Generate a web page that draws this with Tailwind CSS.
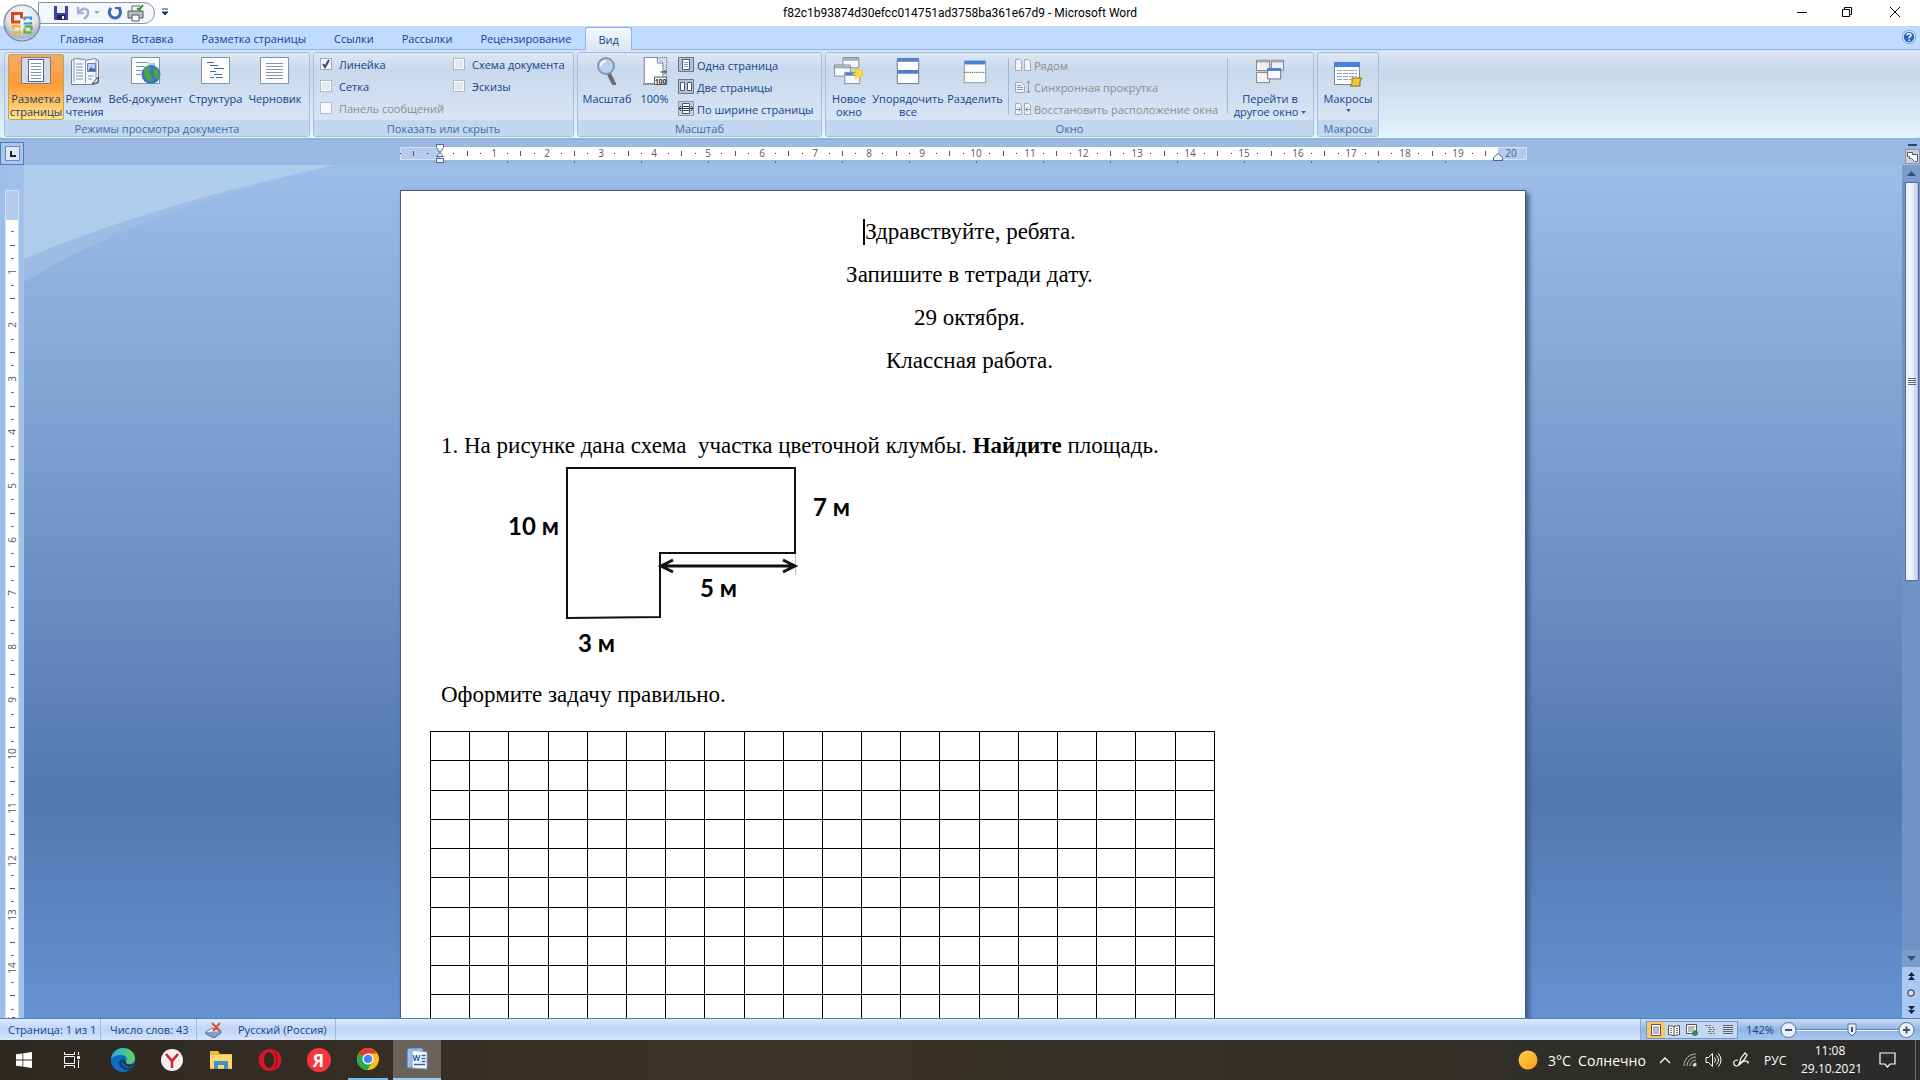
<!DOCTYPE html>
<html lang="ru">
<head>
<meta charset="utf-8">
<title>Microsoft Word</title>
<script src="https://cdn.jsdelivr.net/npm/@tailwindcss/browser@4"></script>
</head>
<body class="flex h-screen flex-col overflow-hidden bg-[#9ab9e2] font-['Open_Sans','Noto_Sans',sans-serif] text-[11px] leading-[13px] text-[#15428b]">

<!-- Title bar -->
<header class="relative flex h-[26px] shrink-0 items-center bg-white">
  <button aria-label="Office" class="absolute top-[4px] left-[3px] z-10 size-[38px]">
    <svg viewBox="0 0 38 38" class="size-full">
      <defs><radialGradient id="orb" cx=".5" cy=".3" r=".75"><stop offset="0" stop-color="#fff"/><stop offset=".55" stop-color="#dfe3ea"/><stop offset=".8" stop-color="#aab3c4"/><stop offset="1" stop-color="#f4f6fa"/></radialGradient></defs>
      <circle cx="19" cy="19" r="18" fill="url(#orb)" stroke="#7d8796" stroke-width="1.2"/>
      <g fill="none" stroke-width="3">
        <path d="M17.500 18H9.500V9.500h9v5" stroke="#d9481c"/>
        <path d="M21.500 13.500h6.500v6h-6.500z" stroke="#4a90d0" stroke-width="2.2" stroke-dasharray="9 2"/>
        <path d="M16.500 22h-6.500v6.500h6.500z" stroke="#f5b52a" stroke-width="2.4" stroke-dasharray="10 2"/>
        <path d="M21.500 22.500h7v6h-7z" stroke="#6fae45" stroke-width="2.4" stroke-dasharray="11 2"/>
      </g>
      <path d="M17.500 17.500h3v3h-3z" fill="#f2f4f8"/>
    </svg>
  </button>
  <div class="absolute top-[2px] left-[38px] flex h-[22px] w-[117px] items-center rounded-r-full border border-[#8a94a5] bg-[#f3f6fb] pl-[14px]">
    <button aria-label="Сохранить" class="size-4"><svg viewBox="0 0 16 16"><path d="M1 1h14v14H2l-1-1z" fill="#3d449c"/><path d="M4 1h8v7H4z" fill="#e9effb"/><path d="M4 10h8v5H4z" fill="#1f2560"/><path d="M9 11h2v3H9z" fill="#fff"/></svg></button>
    <button aria-label="Отменить" class="ml-[7px] size-4"><svg viewBox="0 0 16 16" fill="none" stroke="#a3b3cf" stroke-width="2.4"><path d="M3 7c4-5 10-4 9 2-1 3-3 4-4 5M2 2v6h6"/></svg></button>
    <svg viewBox="0 0 6 4" class="ml-[2px] h-[4px] w-[6px]"><path d="M0 0h6L3 3z" fill="#a5a9b0"/></svg>
    <button aria-label="Вернуть" class="ml-[7px] size-4"><svg viewBox="0 0 16 16" fill="none" stroke="#3a6cb8" stroke-width="3"><path d="M4 3c-4 5 0 10 4 10 5 0 7-6 4-10"/><path d="M8 3h5v5" stroke-width="2"/></svg></button>
    <button aria-label="Печать" class="ml-[4px] size-[18px]"><svg viewBox="0 0 18 18"><path d="M5 2h8v6H5z" fill="#fff" stroke="#666"/><path d="M1 7h15v7H1z" fill="#b9bcc2" stroke="#555"/><path d="M5 11h7v6H5z" fill="#fff" stroke="#555"/><path d="M10 4l2 2 4-5" fill="none" stroke="#2f9a32" stroke-width="2"/></svg></button>
  </div>
  <button aria-label="Настройка" class="absolute top-[8px] left-[161px]"><svg viewBox="0 0 8 8" class="size-2"><path d="M1 1h6M1 4h6L4 7z" stroke="#1d3c7a" fill="#1d3c7a"/></svg></button>
  <h1 class="grow text-center font-['Roboto','Open_Sans',sans-serif] text-[12px] text-black">f82c1b93874d30efcc014751ad3758ba361e67d9 - Microsoft Word</h1>
  <div class="absolute top-0 right-0 flex text-black">
    <button aria-label="Свернуть" class="grid h-6 w-[45px] place-items-center"><svg viewBox="0 0 12 12" class="size-3" stroke="currentColor" fill="none"><path d="M1 6.500h10"/></svg></button>
    <button aria-label="Восстановить" class="grid h-6 w-[46px] place-items-center"><svg viewBox="0 0 12 12" class="size-3" stroke="currentColor" fill="none"><path d="M1.500 3.500h7v7h-7zM3.500 3V1.500h7v7H9"/></svg></button>
    <button aria-label="Закрыть" class="grid h-6 w-[50px] place-items-center"><svg viewBox="0 0 12 12" class="size-3" stroke="currentColor" fill="none"><path d="M1 1l10 10M11 1L1 11"/></svg></button>
  </div>
</header>

<!-- Ribbon tabs -->
<nav class="flex h-[24px] shrink-0 items-end border-b border-[#8db2e3] bg-[#bfdbff] pl-[46px]">
  <a href="#" class="flex h-[20px] items-center px-[14px] pb-[2px]">Главная</a>
  <a href="#" class="flex h-[20px] items-center px-[14px] pb-[2px]">Вставка</a>
  <a href="#" class="flex h-[20px] items-center px-[14px] pb-[2px]">Разметка страницы</a>
  <a href="#" class="flex h-[20px] items-center px-[14px] pb-[2px]">Ссылки</a>
  <a href="#" class="flex h-[20px] items-center px-[14px] pb-[2px]">Рассылки</a>
  <a href="#" class="flex h-[20px] items-center px-[14px] pb-[2px]">Рецензирование</a>
  <a href="#" class="-mb-px flex h-[23px] items-center rounded-t-[3px] border border-b-0 border-[#8db2e3] bg-linear-to-b from-[#f3f8ff] to-[#dbe6f4] px-[12px]">Вид</a>
  <button aria-label="Справка" class="mr-[4px] mb-[5px] ml-auto size-[14px]"><svg viewBox="0 0 14 14"><circle cx="7" cy="7" r="6" fill="#2a62c4" stroke="#eaf3ff" stroke-width="1.500"/><circle cx="7" cy="7" r="6.600" fill="none" stroke="#5580c0" stroke-width=".7"/><path d="M5 5.500C5 3 9 3 9 5.300 9 6.700 7 6.500 7 8.300M7 9.500V11" fill="none" stroke="#fff" stroke-width="1.500"/></svg></button>
</nav>

<!-- Ribbon -->
<div class="flex h-[90px] shrink-0 items-start gap-[3px] rounded-b-[3px] border-b-2 border-[#8fb3da] bg-linear-to-b from-[#dbe4f3] from-0% via-[#c6d8e9] via-25% to-[#e3f4fd] to-100% px-[4px] pt-[2px]">

  <section class="flex h-[85px] w-[306px] flex-col justify-between rounded-[3px] border border-[#a3bfdf] bg-linear-to-b from-[#dde7f4] from-0% via-[#c8d9ed] via-20% to-[#dbe9f7]">
    <div class="flex pt-[1px] pl-[3px]">
      <button class="flex h-[66px] w-[56px] flex-col items-center gap-[7px] rounded-[2px] border border-[#c2a35c] bg-linear-to-b from-[#f3a964] from-0% via-[#fb9b33] via-45% to-[#fee58c] pt-[2px] text-[#2d3b5e]">
        <svg viewBox="0 0 30 28" class="h-7 w-[30px] shrink-0"><path d="M.5.5h29v26H.5z" fill="#cfdbea" stroke="#7a7f8c"/><path d="M7.500 2.500h15v22h-15z" fill="#fff" stroke="#56617a"/><path d="M10 6.500h10m-10 3h10m-10 3h10m-10 3h10m-10 3h10m-10 3h10" stroke="#7d94b8"/></svg>
        <span>Разметка<br>страницы</span>
      </button>
      <button class="flex h-[66px] w-[41px] flex-col items-center gap-[7px] pt-[3px]">
        <svg viewBox="0 0 30 28" class="h-7 w-[30px] shrink-0"><path d="M1.500 3.500l4-2 9 1 1 1 9-2 4 2v22l-4 2H1.500z" fill="#f4f7fb" stroke="#76808f"/><path d="M15.500 3v23M4 2.500V25M26 2.500V22" stroke="#8e98a8"/><path d="M6 7h7m-7 3h7m-7 3h7m-7 3h7m-7 3h7m-7 3h7M18 19h6m-6 3h4" stroke="#7d94b8"/><path d="M17.500 6.500h8v8h-8z" fill="#b9d2f2" stroke="#5c86bf"/><path d="M18 14l3-4 2 2 2-1v3z" fill="#3e6ba8"/><path d="M22 27l6-7v5z" fill="#fff" stroke="#444"/></svg>
        <span class="text-left">Режим<br>чтения</span>
      </button>
      <button class="flex h-[66px] w-[81px] flex-col items-center gap-[7px] pt-[3px]">
        <svg viewBox="0 0 30 28" class="h-7 w-[30px] shrink-0"><path d="M.5.5h28v26H.5z" fill="#fdfdfe" stroke="#8292ab"/><path d="M5 5.500h12M5 9.500h9M5 13.500h6M5 17.500h5" stroke="#7d94b8"/><path d="M17 6h7v6h-7z" fill="#a7cdf0"/><circle cx="20" cy="17.500" r="9.500" fill="#3d74c8"/><path d="M13 12c3-3 6-3 7-1l-2 4 3 4-1 6c-4-1-8-5-7-13zM24 10c4 3 6 8 3 12l-4-2-1-5z" fill="#4ca34c"/></svg>
        <span>Веб-документ</span>
      </button>
      <button class="flex h-[66px] w-[59px] flex-col items-center gap-[7px] pt-[3px]">
        <svg viewBox="0 0 30 28" class="h-7 w-[30px] shrink-0"><path d="M.5.500h28v26H.5z" fill="#fdfdfe" stroke="#8292ab"/><path d="M6 5.500h7M9 8.500h8M13 11.500h10M9 14.500h6M13 17.500h8M9 20.500h4m2 0h7" stroke="#3f6fa8"/></svg>
        <span>Структура</span>
      </button>
      <button class="flex h-[66px] w-[60px] flex-col items-center gap-[7px] pt-[3px]">
        <svg viewBox="0 0 30 28" class="h-7 w-[30px] shrink-0"><path d="M.5.500h28v26H.5z" fill="#fdfdfe" stroke="#8292ab"/><path d="M6 6.500h17m-17 3h17m-17 3h17m-17 3h17m-17 3h17m-17 3h17" stroke="#8b95a8"/></svg>
        <span>Черновик</span>
      </button>
    </div>
    <h2 class="bg-[#c1d8f0] pt-[2px] pb-[1px] text-center text-[#3e6aaa]">Режимы просмотра документа</h2>
  </section>

  <section class="flex h-[85px] w-[261px] flex-col justify-between rounded-[3px] border border-[#a3bfdf] bg-linear-to-b from-[#dde7f4] from-0% via-[#c8d9ed] via-20% to-[#dbe9f7]">
    <div class="grid grid-cols-[133px_1fr] grid-rows-[22px_22px_22px] items-center pl-[6px]">
      <label class="flex items-center gap-[7px]"><input type="checkbox" checked class="peer size-3 appearance-none border border-[#97a9c4] bg-[#f4f6f9] bg-[url('data:image/svg+xml,%3Csvg%20xmlns=%22http://www.w3.org/2000/svg%22%20viewBox=%220%200%2010%2010%22%3E%3Cpath%20d=%22M2%205l2%203%204-7%22%20fill=%22none%22%20stroke=%22%233b4a6b%22%20stroke-width=%222%22/%3E%3C/svg%3E')]">Линейка</label>
      <label class="flex items-center gap-[7px]"><input type="checkbox" class="size-3 appearance-none border border-[#a9b7cc] bg-[#e3e7ee] ring-1 ring-white ring-inset">Схема документа</label>
      <label class="flex items-center gap-[7px]"><input type="checkbox" class="size-3 appearance-none border border-[#a9b7cc] bg-[#e3e7ee] ring-1 ring-white ring-inset">Сетка</label>
      <label class="flex items-center gap-[7px]"><input type="checkbox" class="size-3 appearance-none border border-[#a9b7cc] bg-[#e3e7ee] ring-1 ring-white ring-inset">Эскизы</label>
      <label class="flex items-center gap-[7px] whitespace-nowrap text-[#8d8d8d]"><input type="checkbox" disabled class="size-3 appearance-none border border-[#b3bfd0] bg-[#f7f8fa]">Панель сообщений</label>
    </div>
    <h2 class="bg-[#c1d8f0] pt-[2px] pb-[1px] text-center text-[#3e6aaa]">Показать или скрыть</h2>
  </section>

  <section class="flex h-[85px] w-[245px] flex-col justify-between rounded-[3px] border border-[#a3bfdf] bg-linear-to-b from-[#dde7f4] from-0% via-[#c8d9ed] via-20% to-[#dbe9f7]">
    <div class="flex pt-[1px] pl-[3px]">
      <button class="flex h-[66px] w-[52px] flex-col items-center gap-[7px] pt-[3px]">
        <svg viewBox="0 0 24 28" class="h-7 w-6 shrink-0"><path d="M14 17l5 10" stroke="#6e6a70" stroke-width="4" stroke-linecap="round"/><circle cx="11" cy="9" r="8" fill="#b5d2f0" stroke="#8796ae" stroke-width="2"/><path d="M6 9a5 5 0 015-5" stroke="#fff" stroke-width="2" fill="none"/></svg>
        <span>Масштаб</span>
      </button>
      <button class="flex h-[66px] w-[43px] flex-col items-center gap-[7px] pt-[3px]">
        <svg viewBox="0 0 26 30" class="h-7 w-[26px] shrink-0"><path d="M1.500.5h14l6 6v22h-20z" fill="#fff" stroke="#6f7f99"/><path d="M15.500.5v6h6" fill="#dde6f2" stroke="#6f7f99"/><path d="M18 .5h7.500V20M0 29.500h12" fill="none" stroke="#333" stroke-dasharray="1 1.500"/><path d="M19 16h6m-2-2l2 2-2 2" fill="none" stroke="#333"/><path d="M12.500 21.500h13v8h-13z" fill="#fff" stroke="#444"/><text x="19" y="28.500" text-anchor="middle" font-size="7" font-weight="700" fill="#222">100</text></svg>
        <span>100%</span>
      </button>
      <div class="ml-[2px] grid grid-rows-[22px_22px_22px] items-center whitespace-nowrap">
        <button class="flex items-center gap-[3px]"><svg viewBox="0 0 16 16" class="size-4"><path d="M.5.5h15v14H.5z" fill="#b6c0d2" stroke="#67748c"/><path d="M4.500 2.500h7v10h-7z" fill="#fff" stroke="#4c5872"/><path d="M6 5.500h4m-4 2h4m-4 2h4" stroke="#7d94b8"/></svg>Одна страница</button>
        <button class="flex items-center gap-[3px]"><svg viewBox="0 0 16 16" class="size-4"><path d="M.5.5h15v14H.5z" fill="#b6c0d2" stroke="#67748c"/><path d="M2.500 3.500h4v8h-4zM9.500 3.500h4v8h-4z" fill="#fff" stroke="#4c5872"/></svg>Две страницы</button>
        <button class="flex items-center gap-[3px]"><svg viewBox="0 0 16 16" class="size-4"><path d="M.5.5h15v14H.5z" fill="#c5cedc" stroke="#8b96aa"/><path d="M4.500 2.500h7v10h-7z" fill="#fff" stroke="#4c5872"/><path d="M1 7.500h14M3 5L1 7.500 3 10M13 5l2 2.500-2 2.500M5 5.500h6m-6 4h6" fill="none" stroke="#333f58"/></svg>По ширине страницы</button>
      </div>
    </div>
    <h2 class="bg-[#c1d8f0] pt-[2px] pb-[1px] text-center text-[#3e6aaa]">Масштаб</h2>
  </section>

  <section class="flex h-[85px] w-[489px] flex-col justify-between rounded-[3px] border border-[#a3bfdf] bg-linear-to-b from-[#dde7f4] from-0% via-[#c8d9ed] via-20% to-[#dbe9f7]">
    <div class="flex pt-[1px] pl-[3px]">
      <button class="flex h-[66px] w-[40px] flex-col items-center gap-[7px] pt-[3px]">
        <svg viewBox="0 0 32 30" class="h-7 w-8 shrink-0"><g fill="#f6f8fb" stroke="#7c8798"><path d="M9.500.5h17v11h-17zM.5 8.500h17v12H.5z"/><path d="M11.500 16.500h16v12h-16z"/></g><path d="M10 1h16v3H10zM1 9h16v3H1z" fill="#a5adb9"/><path d="M12 17h15v3H12z" fill="#4a80d0"/><path d="M26 11l1.500 4 4-2-2 4 2.500 2-4 .5 1 4-3-2.500-3 2.500.5-4-4-1 3.500-2-2-4 4 2z" fill="#ffd83a" stroke="#f0b91a" stroke-width=".5"/></svg>
        <span>Новое<br>окно</span>
      </button>
      <button class="flex h-[66px] w-[78px] flex-col items-center gap-[7px] pt-[3px]">
        <svg viewBox="0 0 26 30" class="h-7 w-[26px] shrink-0"><path d="M1.500 1.500h23v13h-23zM1.500 15.500h23v13h-23z" fill="#fff" stroke="#5c6f90"/><path d="M2 2h22v3H2zM2 15h22v3H2z" fill="#4a80d8"/></svg>
        <span>Упорядочить<br>все</span>
      </button>
      <button class="flex h-[66px] w-[56px] flex-col items-center gap-[7px] pt-[3px]">
        <svg viewBox="0 0 26 30" class="h-7 w-[26px] shrink-0"><path d="M1.500 4.500h23v23h-23z" fill="#fbfaf4" stroke="#8592a8"/><path d="M2 4h22v4H2z" fill="#4a80d8"/><path d="M2 16.500h22" stroke="#333" stroke-dasharray="1 1"/></svg>
        <span>Разделить</span>
      </button>
      <div class="mt-[4px] ml-[5px] h-[56px] w-px bg-[#9db9da]"></div>
      <div class="ml-[6px] grid w-[212px] grid-rows-[22px_22px_22px] items-center whitespace-nowrap text-[#8d8d8d]">
        <button disabled class="flex items-center gap-[3px]"><svg viewBox="0 0 16 16" class="size-4"><path d="M.5 2.500h4l2 2v9h-6zM9.500 2.500h4l2 2v9h-6z" fill="#f0f3f8" stroke="#a3abb8"/></svg>Рядом</button>
        <button disabled class="flex items-center gap-[3px]"><svg viewBox="0 0 16 16" class="size-4"><path d="M.5 3.500h6l3 3v7h-9z" fill="#eef1f6" stroke="#a3abb8"/><path d="M2 6.500h4m-4 2h6m-6 2h6M13.500 2v12M12 4l1.500-2L15 4m-3 8l1.500 2 1.500-2" fill="none" stroke="#949dac"/></svg>Синхронная прокрутка</button>
        <button disabled class="flex items-center gap-[3px]"><svg viewBox="0 0 16 16" class="size-4"><path d="M.5 2.500h4l2 2v9h-6zM9.500 2.500h4l2 2v9h-6z" fill="#f0f3f8" stroke="#a3abb8"/><path d="M1 8.500h4M3.500 6.500l2 2-2 2M15 8.500h-4m1.500-2l-2 2 2 2" fill="none" stroke="#7f8896"/></svg>Восстановить расположение окна</button>
      </div>
      <div class="mt-[4px] h-[56px] w-px bg-[#9db9da]"></div>
      <button class="ml-[3px] flex h-[66px] w-[78px] flex-col items-center gap-[7px] pt-[3px] whitespace-nowrap">
        <svg viewBox="0 0 32 30" class="h-7 w-8 shrink-0"><g fill="#f3f1f0" stroke="#7d7d82"><path d="M1.500 3.500h14v11h-14zM17.500 3.500h13v11h-13zM1.500 16.500h14v11h-14z"/></g><path d="M2 4h13v2H2zM18 4h12v2H18z" fill="#a8a8ac"/><path d="M13.500 12.500h14v11h-14z" fill="#fff" stroke="#5c6f90"/><path d="M13 12h15v3H13z" fill="#4a80d8"/></svg>
        <span>Перейти в<br>другое окно <svg viewBox="0 0 5 3" class="mb-[2px] inline h-[3px] w-[5px]"><path d="M0 0h5L2.500 3z" fill="#3b6299"/></svg></span>
      </button>
    </div>
    <h2 class="bg-[#c1d8f0] pt-[2px] pb-[1px] text-center text-[#3e6aaa]">Окно</h2>
  </section>

  <section class="flex h-[85px] w-[62px] flex-col justify-between rounded-[3px] border border-[#a3bfdf] bg-linear-to-b from-[#dde7f4] from-0% via-[#c8d9ed] via-20% to-[#dbe9f7]">
    <button class="flex flex-col items-center gap-[4px] pt-[7px]">
      <svg viewBox="0 0 30 28" class="h-7 w-[30px] shrink-0"><path d="M1.500 2.500h25v22h-25z" fill="#fff" stroke="#7186a8"/><path d="M1 2h26v5H1z" fill="#4a80d8"/><path d="M4 10.500h20M4 13.500h20M4 16.500h20M4 19.500h14" stroke="#8ea2c2" stroke-dasharray="5 1"/><path d="M19 18h10l-2 3v5H17l2-3z" fill="#f2c63d" stroke="#8a6a1e"/></svg>
      <span>Макросы</span>
      <svg viewBox="0 0 5 3" class="h-[3px] w-[5px]"><path d="M0 0h5L2.500 3z" fill="#3b6299"/></svg>
    </button>
    <h2 class="bg-[#c1d8f0] pt-[2px] pb-[1px] text-center text-[#3e6aaa]">Макросы</h2>
  </section>
</div>

<!-- Horizontal ruler -->
<div class="flex h-[25px] shrink-0 items-start bg-[#9ab9e2]">
  <button aria-label="Табуляция" class="mt-[2px] grid h-[23px] w-[24px] place-items-center border border-[#5577bb] bg-[#a9c6ee]"><svg viewBox="0 0 15 15" class="size-[15px]"><path d="M.5.5h14v14H.5z" fill="#dce8f8" stroke="#7389b5"/><path d="M6 5v5h5" fill="none" stroke="#223" stroke-width="2"/></svg></button>
  <div class="flex grow justify-center"><svg id="hruler" viewBox="0 1 1128 25" class="h-[25px] w-[1128px] font-['Open_Sans',sans-serif] text-[10px]"></svg></div>
  <div class="flex w-[16px] flex-col items-center gap-[3px] pt-[4px]">
    <div class="h-[2px] w-[9px] bg-[#2b4675]"></div>
    <button aria-label="Линейка" class="size-[15px] border border-[#8d94a8] bg-[#c9cfdc]"><svg viewBox="0 0 13 13" fill="#fff" stroke="#555b6b"><path d="M1.500 2.500h5v2h5v7h-3l-3-3h-2v-2h-2z"/></svg></button>
  </div>
</div>

<!-- Document area -->
<main class="flex min-h-0 grow">
  <div class="w-[24px] shrink-0 overflow-hidden bg-linear-to-r from-[#9dbdea] to-[#a3c1ea]"><svg id="vruler" viewBox="0 0 24 853" class="h-[853px] w-[24px] font-['Open_Sans',sans-serif] text-[10px]"></svg></div>
  <div class="relative flex grow justify-center overflow-hidden bg-linear-to-b from-[#9dbdea] from-0% via-[#5378af] via-74% to-[#6592d2] to-100%">
    <svg viewBox="0 0 310 120" class="absolute top-0 left-0 h-[120px] w-[310px]">
      <path d="M0 0h310C200 27 90 62 0 117z" fill="#a4c2e6" fill-opacity=".6"/>
      <path d="M0 0h310C200 25 100 52 0 94z" fill="#b4cfed" fill-opacity=".85"/>
    </svg>
    <article class="relative mt-[25px] h-[1000px] w-[1126px] shrink-0 border border-[#4b5a78] bg-white pr-[27px] pl-[40px] font-['Liberation_Serif',serif] text-[23px] leading-[26px] text-black shadow-[3px_3px_5px_#3f5a85]">
      <div class="flex flex-col items-center gap-[17px] pt-[28px]">
        <p class="border-l-2 border-black">Здравствуйте, ребята.</p>
        <p>Запишите в тетради дату.</p>
        <p>29 октября.</p>
        <p>Классная работа.</p>
      </div>
      <p class="mt-[59px] whitespace-pre">1. На рисунке дана схема  участка цветочной клумбы. <b>Найдите</b> площадь.</p>
      <svg viewBox="0 0 360 200" class="mt-px ml-[59px] h-[200px] w-[360px] font-['Lato','Open_Sans',sans-serif] text-[24px] font-bold">
        <path d="M67 8h228v85H160v64l-93 1z" fill="none" stroke="#111" stroke-width="2"/>
        <path d="M295.500 94v21" stroke="#b9bdc6"/>
        <path d="M163 106h130M173 100l-12 6 12 6M283 100l12 6-12 6" fill="none" stroke="#111" stroke-width="3"/>
        <text x="8" y="75">10 м</text><text x="313" y="56">7 м</text><text x="200" y="137">5 м</text><text x="78" y="192">3 м</text>
      </svg>
      <p class="mt-[22px]">Оформите задачу правильно.</p>
      <table class="mt-[23px] -ml-[11px] h-[323px] w-[785px] table-fixed border-collapse"><tbody id="cells"></tbody></table>
    </article>
  </div>
  <aside class="flex w-[18px] shrink-0 flex-col items-center bg-[#a9c8f3]">
    <button aria-label="Вверх" class="grid h-[17px] w-full shrink-0 place-items-center bg-[#7b9dcb]"><svg viewBox="0 0 9 5" class="h-[5px] w-[9px]"><path d="M0 5h9L4.500 0z" fill="#34507f"/></svg></button>
    <div class="min-h-0 w-full grow bg-[#6f93c4] pl-[3px]">
      <div class="flex h-[52%] w-[14px] flex-col items-center justify-center gap-[1px] rounded-[1px] border border-[#5569a0] bg-linear-to-r from-[#edf3f8] from-50% to-[#b7c8dd]"><i class="h-px w-2 bg-[#667]"></i><i class="h-px w-2 bg-[#667]"></i><i class="h-px w-2 bg-[#667]"></i><i class="h-px w-2 bg-[#667]"></i></div>
    </div>
    <button aria-label="Вниз" class="grid h-[17px] w-full shrink-0 place-items-center bg-[#7b9dcb]"><svg viewBox="0 0 9 5" class="h-[5px] w-[9px]"><path d="M0 0h9L4.500 5z" fill="#34507f"/></svg></button>
    <button aria-label="Предыдущая" class="grid h-[17px] w-full shrink-0 place-items-center"><svg viewBox="0 0 7 8" class="h-2 w-[7px]"><path d="M0 4h7L3.500 0zM0 8h7L3.500 4z" fill="#14233f"/></svg></button>
    <button aria-label="Объект" class="grid h-[17px] w-full shrink-0 place-items-center"><svg viewBox="0 0 8 8" class="size-2"><circle cx="4" cy="4" r="3.200" fill="#dde" stroke="#223"/></svg></button>
    <button aria-label="Следующая" class="grid h-[17px] w-full shrink-0 place-items-center"><svg viewBox="0 0 7 8" class="h-2 w-[7px]"><path d="M0 0h7L3.500 4zM0 4h7L3.500 8z" fill="#14233f"/></svg></button>
  </aside>
</main>

<!-- Status bar -->
<footer class="flex h-[22px] shrink-0 items-stretch border-t border-[#567db1] bg-linear-to-b from-[#dbe9fc] from-0% via-[#bdd5f5] via-50% to-[#d6e5fa] whitespace-nowrap">
  <span class="flex w-[101px] items-center border-r border-[#9ab8e0] pl-[8px]">Страница: 1 из 1</span>
  <span class="flex w-[96px] items-center border-r border-[#9ab8e0] pl-[9px]">Число слов: 43</span>
  <span class="flex w-[139px] items-center gap-[16px] border-r border-[#9ab8e0] pl-[8px]"><svg viewBox="0 0 17 16" class="h-4 w-[17px]"><path d="M1 10l6-4 9 3-7 5z" fill="#fff" stroke="#5a76ab"/><path d="M1 10v2l8 4 7-5V9" fill="#7f9dd0" stroke="#4a68a0"/><path d="M7 1l8 8M15 1L8 9" stroke="#e2512c" stroke-width="2"/></svg>Русский (Россия)</span>
  <div class="ml-auto flex w-[280px] items-center border-l border-[#86a9d8] bg-linear-to-b from-[#c9dcf6] from-0% via-[#90b4e6] via-50% to-[#a9c7f0] pl-[5px]">
    <div class="flex h-[18px] w-[92px] border border-[#7896c4] bg-[#c4d8f3]">
      <button aria-label="Разметка" class="grid w-[18px] place-items-center bg-[#fbc466]"><svg viewBox="0 0 12 12" class="size-3"><path d="M1.500.5h9v11h-9z" fill="#fff" stroke="#555"/><path d="M3 3h6M3 5h6M3 7h6M3 9h6" stroke="#777"/></svg></button>
      <button aria-label="Чтение" class="grid w-[18px] place-items-center"><svg viewBox="0 0 12 12" class="size-3"><path d="M.5 1.500l5.500 1 5.500-1v9l-5.500 1-5.500-1zM6 2v9" fill="#fff" stroke="#555"/><path d="M2 4.500h2m-2 2h2m-2 2h2m4-4h2m-2 2h2m-2 2h2" stroke="#777"/></svg></button>
      <button aria-label="Веб" class="grid w-[18px] place-items-center"><svg viewBox="0 0 12 12" class="size-3"><path d="M.5.5h10v9H.5z" fill="#fff" stroke="#555"/><path d="M2 3h7M2 5h6M2 7h4" stroke="#777"/><circle cx="9" cy="9" r="3" fill="#3a8a6a"/></svg></button>
      <button aria-label="Структура" class="grid w-[18px] place-items-center"><svg viewBox="0 0 12 12" class="size-3"><path d="M1 1.500h6M4 3.500h6M5 5.500h6M4 7.500h6M5 9.500h6" stroke="#777" stroke-dasharray="3 1"/></svg></button>
      <button aria-label="Черновик" class="grid w-[18px] place-items-center"><svg viewBox="0 0 12 12" class="size-3"><path d="M1 1.500h10M1 3.500h10M1 5.500h10M1 7.500h10M1 9.500h10" stroke="#666"/></svg></button>
    </div>
    <span class="w-[42px] pl-[8px]">142%</span>
    <svg viewBox="0 0 136 18" class="h-[18px] w-[136px]">
      <path d="M16 9.500h104" stroke="#f2f7ff"/><path d="M16 8.500h104" stroke="#6482b5"/>
      <g fill="#e8f0fb" stroke="#5d6d8c"><circle cx="8.500" cy="9" r="7.500"/><circle cx="126.500" cy="9" r="7.500"/><path d="M68 3h8v8l-4 4-4-4z"/></g>
      <path d="M5 9h7M123 9h7m-3.500-3.500v7M72 6v5" stroke="#44506a" stroke-width="2"/>
    </svg>
  </div>
</footer>

<!-- Windows taskbar -->
<div class="flex h-[40px] shrink-0 items-center bg-linear-to-r from-[#2e2823] from-0% via-[#3b3426] via-40% to-[#2b2b2a] text-[12px] text-white">
  <button aria-label="Пуск" class="grid h-10 w-12 place-items-center"><svg viewBox="0 0 16 16" class="size-4" fill="#fff"><path d="M0 2.300L6.500 1.400v6.200H0zM7.300 1.300L16 0v7.600H7.300zM0 8.400h6.500v6.200L0 13.700zM7.300 8.400H16V16l-8.700-1.200z"/></svg></button>
  <button aria-label="Просмотр задач" class="grid h-10 w-12 place-items-center"><svg viewBox="0 0 16 16" class="size-4" fill="none" stroke="#fff"><path d="M.5 0v2.500h10V0M.5 16v-2.500h10V16M.5 4.500h10v7H.5zM14.500 0v3m0 5v8"/><path d="M13.500 4.500h2v2h-2z" fill="#fff"/></svg></button>
  <button aria-label="Edge" class="ml-[3px] grid h-10 w-12 place-items-center"><svg viewBox="0 0 24 24" class="size-6"><defs><linearGradient id="eg"><stop stop-color="#2aa7e0"/><stop offset="1" stop-color="#5fd35f"/></linearGradient></defs><circle cx="12" cy="12" r="12" fill="#0f6cbf"/><path d="M0 11C1 4 6 0 12 0c7 0 12 5 12 10 0 4-3 6-6 6-2 0-4-1-3-2 2-3 0-7-4-7-5 0-10 2-11 4z" fill="url(#eg)"/><path d="M8 14c0 5 4 8 9 8 2 0 4-1 5-3-5 2-11 0-11-5 0-1 0-2 1-3-2 0-4 1-4 3z" fill="#0b3f80"/><path d="M12 11c-1 2 0 7 7 8l4-2c1-1 0-1-1-1-2 1-8 1-7-2z" fill="#332c25"/></svg></button>
  <button aria-label="Яндекс Браузер" class="grid h-10 w-[50px] place-items-center"><svg viewBox="0 0 24 24" class="size-6"><circle cx="12" cy="12" r="11" fill="#f1f1f1"/><path d="M6 6l6 7 6-7M12 12v8" stroke="#e01f26" stroke-width="2.600" fill="none"/></svg></button>
  <button aria-label="Проводник" class="grid h-10 w-12 place-items-center"><svg viewBox="0 0 24 24" class="size-6"><path d="M1 3h8l2 3h12v15H1z" fill="#f0b93a"/><path d="M1 7h22v13H1z" fill="#fbd96b"/><path d="M5 21v-8h14v8h-4v-4H9v4z" fill="#3f8fd0"/></svg></button>
  <button aria-label="Opera" class="grid h-10 w-[49px] place-items-center"><svg viewBox="0 0 24 24" class="size-6"><ellipse cx="12" cy="12" rx="11.500" ry="11" fill="#dc1428"/><ellipse cx="11" cy="12" rx="5" ry="8" fill="#33291f"/><path d="M14 2c8 2 8 18 0 20 5-4 5-16 0-20z" fill="#a70e1e"/></svg></button>
  <button aria-label="Яндекс" class="grid h-10 w-[49px] place-items-center"><span class="grid size-6 place-items-center rounded-full bg-[#f8343c] text-[17px] font-bold">Я</span></button>
  <button aria-label="Chrome" class="mr-[5px] ml-[5px] grid h-10 w-10 place-items-center border-b-2 border-[#76b9ed]"><svg viewBox="0 0 24 24" class="size-6"><circle cx="12" cy="12" r="11" fill="#fbc116"/><path d="M12 12L2.500 6.500A11 11 0 0121.500 6.500H12z" fill="#e33b2e"/><path d="M12 12L2.500 6.500A11 11 0 0011.500 23l5-8z" fill="#2da94f"/><circle cx="12" cy="12" r="5.500" fill="#fff"/><circle cx="12" cy="12" r="4.300" fill="#4285f4"/></svg></button>
  <button aria-label="Word" class="grid h-10 w-12 place-items-center border-b-2 border-[#9ccbf0] bg-[#6a6258]"><svg viewBox="0 0 24 24" class="size-6"><path d="M2 4c0-2 1-3 3-3h13v20H2z" fill="#9fc0e8" stroke="#426eb0"/><path d="M7 3l15 2v17l-15-1z" fill="#f7faff" stroke="#7f9dc9"/><path d="M16.500 8.500h4m-4 3h4m-4 3h4M9 17.500h11" stroke="#3562ad" stroke-width="1.500"/><text x="7.500" y="14" font-size="8" font-weight="700" fill="#2a55a3">W</text></svg></button>
  <div class="ml-auto flex items-center">
    <button class="flex items-center gap-[10px] text-[14px] whitespace-pre"><svg viewBox="0 0 20 20" class="size-5"><defs><linearGradient id="sun" x2="1" y2="1"><stop stop-color="#ffd24a"/><stop offset="1" stop-color="#fb9a1c"/></linearGradient></defs><circle cx="10" cy="10" r="9.500" fill="url(#sun)"/></svg><span class="w-[98px] text-left">3°C  Солнечно</span></button>
    <button aria-label="Скрытые значки" class="ml-[13px]"><svg viewBox="0 0 12 8" class="h-2 w-3" fill="none" stroke="#fff" stroke-width="1.300"><path d="M1 7l5-5 5 5"/></svg></button>
    <button aria-label="Сеть" class="ml-[12px]"><svg viewBox="0 0 14 14" class="size-[14px]" fill="none" stroke="#bbb"><path d="M1 13C1 6 6 1 13 1M4 13c0-5 4-9 9-9M7 13c0-3 3-6 6-6"/><path d="M10 13c0-2 1-3 3-3v3z" fill="#fff"/></svg></button>
    <button aria-label="Звук" class="ml-[8px]"><svg viewBox="0 0 17 16" class="h-4 w-[17px]" fill="none" stroke="#fff"><path d="M1 5.500h2.500l4-4v13l-4-4H1zM9.500 5.500q2 2.500 0 5M11.500 3.500q4 4.500 0 9M13.500 1.500q5 6.500 0 13"/></svg></button>
    <button aria-label="Перо" class="ml-[11px]"><svg viewBox="0 0 17 16" class="h-4 w-[17px]" fill="none" stroke="#fff" stroke-width="1.200"><path d="M5 8c-6 0-5 6-1 6 3 0 3-4 8-5 4 0 4 2 2 2M6 12l2-6 4-5 2 2-3 5z"/></svg></button>
    <span class="ml-[14px] w-[37px]">РУС</span>
    <span class="w-[58px] text-center leading-[18px] whitespace-nowrap">11:08<br>29.10.2021</span>
    <button aria-label="Уведомления" class="ml-[20px]"><svg viewBox="0 0 17 16" class="h-4 w-[17px]" fill="none" stroke="#fff" stroke-width="1.200"><path d="M1 1h15v11h-5l-2.500 3L6 12H1z"/></svg></button>
    <div class="mr-[4px] ml-[19px] h-10 w-px bg-[#6b6b68]"></div>
  </div>
</div>

<script>
  // One centimetre on both rulers, in pixels
  const CM = 53.6;

  // Horizontal ruler: the text area runs from 40 to 1098
  let h = '<path d="M.5 8.500h1126v12H.5z" fill="#b4cbee" stroke="#d3e2f8"/><path d="M40 8h1058v13H40z" fill="#fff"/>';
  for (let q = -3; q < 79; q++) {
    if (q === 0) continue;
    const x = Math.round(40 + q * CM / 4);
    if (q > 0 && q % 4 === 0) h += `<text x="${x}" y="18" text-anchor="middle" fill="#55585f">${q / 4}</text>`;
    else if (q % 2 === 0) h += `<path d="M${x}.5 12v5" stroke="#4c5668"/>`;
    else h += `<path d="M${x} 14.500h1" stroke="#333" />`;
  }
  h += '<text x="1111" y="18" text-anchor="middle" fill="#4a6288">20</text>';
  for (let x = 107; x < 1060; x += 67) h += `<path d="M${x}.5 22v2" stroke="#4c6a9a"/>`;
  h += '<g fill="#f2f6fc" stroke="#51658c"><path d="M36.500 5.500h7v3l-3.500 5-3.500-5zM40 13.500l3.500 4h-7zM36.500 19.500h7v4h-7z"/><path d="M1098 14.500l4.500 4v3h-9v-3z"/></g>';
  document.getElementById('hruler').innerHTML = h;

  // Vertical ruler: the zero mark is at 53
  let v = '<path d="M5.500 25.500h13V860h-13z" fill="#b4cbee" stroke="#d3e2f8"/><path d="M6 55h12v800H6z" fill="#fff"/>';
  for (let q = 1; q < 61; q++) {
    const y = Math.round(53 + q * CM / 4);
    if (q % 4 === 0) v += `<text transform="translate(16 ${y}) rotate(-90)" text-anchor="middle" fill="#55585f">${q / 4}</text>`;
    else if (q % 2 === 0) v += `<path d="M10 ${y}.5h5" stroke="#4c5668"/>`;
    else v += `<path d="M11.500 ${y}.5h2" stroke="#333"/>`;
  }
  document.getElementById('vruler').innerHTML = v;

  // Squared grid for the written solution
  document.getElementById('cells').innerHTML =
    ('<tr>' + '<td class="border border-black p-0"></td>'.repeat(20) + '</tr>').repeat(11);
</script>
</body>
</html>
